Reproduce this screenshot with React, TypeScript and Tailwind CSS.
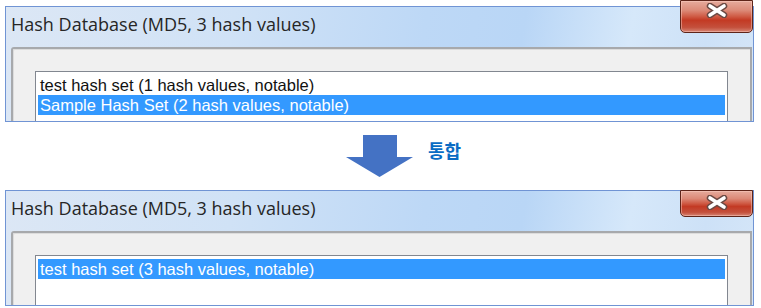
import React from "react";

const titleBg =
  "bg-[linear-gradient(100deg,#dce7f5_0%,#d0e2f6_30%,#bdd8f6_55%,#b9d6f6_68%,#d6e8fa_82%,#cde1f7_92%,#d5e6f8_100%)]";

function CloseButton({ top }: { top: boolean }) {
  return (
    <div
      className={
        "absolute right-0 w-[73px] flex justify-center rounded-b-[5px] border border-[#5e2419] bg-[linear-gradient(to_bottom,#e6ab9d_0%,#dc8a78_30%,#cf5a44_50%,#c33a24_62%,#c4503c_85%,#d68574_100%)] shadow-[inset_0_0_0_1px_rgba(255,210,200,0.45)] " +
        (top ? "top-[-7px] h-[33px] pt-[2px]" : "top-[-1px] h-[27px] pt-[4px]")
      }
    >
      <svg width="22" height="15" viewBox="0 0 22 15">
        <path d="M4 3 L18 12 M18 3 L4 12" stroke="#6b4a44" strokeWidth="6.5" strokeLinecap="round" />
        <path d="M4 3 L18 12 M18 3 L4 12" stroke="#ffffff" strokeWidth="3.6" strokeLinecap="round" />
      </svg>
    </div>
  );
}

function HashWindow({ items, selected, top }: { items: string[]; selected: number; top: boolean }) {
  return (
    <div className={"relative w-[749px] h-[116px] border border-[#7094d4] " + titleBg}>
      <CloseButton top={top} />
      <div className="h-[40px] pl-[5px] pt-[5px] font-['Open_Sans',sans-serif] text-[18px] leading-[24px] text-[#262626] whitespace-nowrap">
        Hash Database (MD5, 3 hash values)
      </div>
      <div className="ml-[5px] mr-[1px] h-[74px] border-t-2 border-l-2 border-r-2 border-[#a7a9ac] rounded-tl-[3px] bg-[#f0f0f0] pt-[22px] px-[22px] shadow-[inset_1px_1px_0_#dcdcdc]">
        <div className="h-full border-t border-l border-r border-[#828790] bg-white pt-[3px] px-[2px] overflow-hidden">
          {items.map((t, i) => (
            <div
              key={i}
              className={
                "h-[20px] pl-[2px] font-['Liberation_Sans',Arial,sans-serif] text-[16.5px] leading-[20px] whitespace-nowrap " +
                (i === selected ? "bg-[#3399ff] text-white" : "text-[#111111]")
              }
            >
              {t}
            </div>
          ))}
        </div>
      </div>
    </div>
  );
}

export default function App() {
  return (
    <div className="w-[761px] h-[308px] bg-white pl-[5px] pt-[6px] overflow-hidden">
      <HashWindow
        top
        items={["test hash set (1 hash values, notable)", "Sample Hash Set (2 hash values, notable)"]}
        selected={1}
      />
      <div className="h-[68px] flex items-start pl-[341px] pt-[13px]">
        <svg width="67" height="42" viewBox="0 0 67 42">
          <polygon points="17,0 51,0 51,22 67,22 33.5,42 0,22 17,22" fill="#4472c4" />
        </svg>
        <span className="ml-[15px] mt-[5px] font-['Noto_Sans_CJK_KR',sans-serif] font-bold text-[18px] leading-[20px] text-[#0a6cc4]">
          통합
        </span>
      </div>
      <HashWindow top={false} items={["test hash set (3 hash values, notable)"]} selected={0} />
    </div>
  );
}
